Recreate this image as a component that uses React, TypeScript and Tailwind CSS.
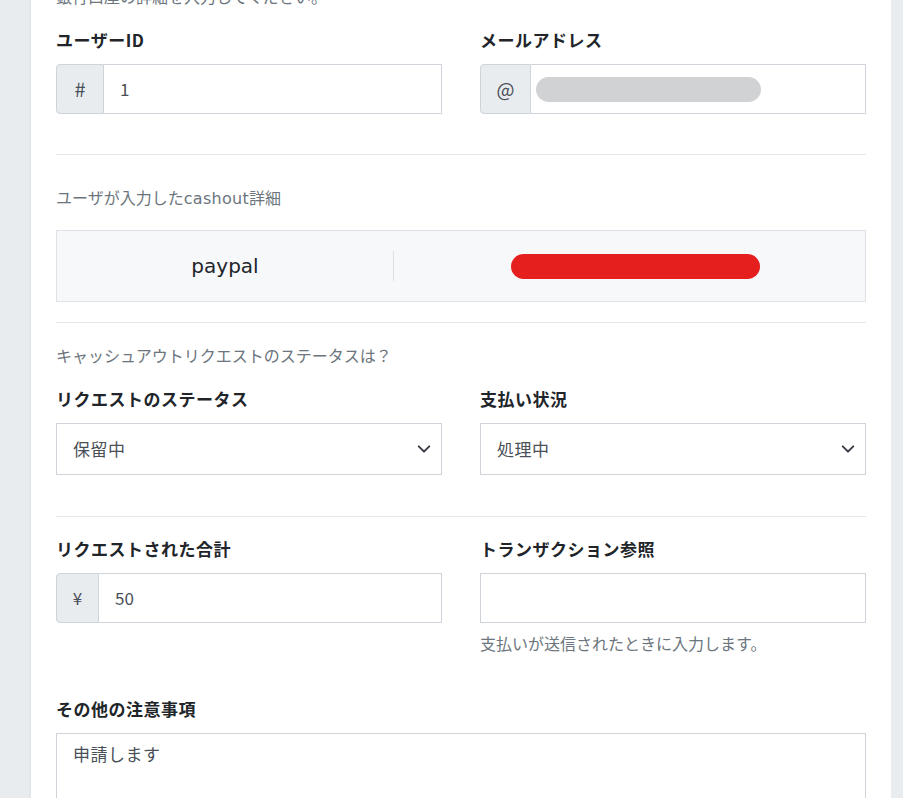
import React from 'react';

const jp = { fontFamily: '"Noto Sans CJK JP", "Noto Sans", sans-serif' };

function Label({ children }: { children: React.ReactNode }) {
  return <div className="text-[17px] leading-[24px] tracking-[0.5px] font-bold text-[#212529] mb-3">{children}</div>;
}

function Chevron() {
  return (
    <svg width="14" height="14" viewBox="0 0 16 16" fill="none" stroke="#343a40" strokeWidth="2.2" strokeLinecap="round" strokeLinejoin="round">
      <path d="M2 5l6 6 6-6" />
    </svg>
  );
}

export default function App() {
  return (
    <div className="min-h-[798px] bg-[#e9ecef] flex pl-[31px] pr-[12px] overflow-hidden" style={jp}>
      <div className="flex-1 bg-white px-[25px] pb-10 shadow-[-1px_0_2px_rgba(0,0,0,0.05)]">
        {/* clipped intro line */}
        <div className="-mt-[14px] text-[16px] leading-[20px] text-[#6c757d]">銀行口座の詳細を入力してください。</div>

        {/* User / email */}
        <div className="grid grid-cols-2 gap-x-[38px] mt-[22px]">
          <div>
            <Label>ユーザーID</Label>
            <div className="flex h-[50px]">
              <div className="w-[48px] flex items-center justify-center bg-[#e9ecef] border border-[#ced4da] rounded-l-[4px] text-[20px] text-[#495057]">#</div>
              <div className="flex-1 flex items-center border border-l-0 border-[#ced4da] px-4 text-[17px] text-[#495057]">1</div>
            </div>
          </div>
          <div>
            <Label>メールアドレス</Label>
            <div className="flex h-[50px]">
              <div className="w-[51px] flex items-center justify-center bg-[#e9ecef] border border-[#ced4da] rounded-l-[4px] text-[19px] text-[#495057]">@</div>
              <div className="flex-1 flex items-center border border-l-0 border-[#ced4da] pl-[5px]">
                <div className="w-[225px] h-[25px] rounded-full bg-[#d1d2d4]" />
              </div>
            </div>
          </div>
        </div>

        <div className="h-px bg-[#e5e7eb] mt-[40px]" />

        <div className="mt-[32px] text-[16px] leading-[20px] text-[#6c757d]">
          ユーザが入力した<span style={{ fontFamily: '"DejaVu Sans", sans-serif', fontSize: '16px', letterSpacing: '0.3px' }}>cashout</span>詳細
        </div>

        <div className="mt-[21px] h-[72px] flex items-center bg-[#f7f8fa] border border-[#dee2e6]">
          <div className="w-[337px] h-[30px] flex items-center justify-center border-r border-[#dee2e6] text-[20px] text-[#212529]" style={{ fontFamily: '"DejaVu Sans", sans-serif' }}>
            paypal
          </div>
          <div className="flex-1 flex items-center justify-center pl-[12px]">
            <div className="w-[249px] h-[25px] rounded-full bg-[#e51e1e]" />
          </div>
        </div>

        <div className="h-px bg-[#e5e7eb] mt-[20px]" />

        <div className="mt-[22px] text-[16px] leading-[20px] text-[#6c757d]">キャッシュアウトリクエストのステータスは？</div>

        <div className="grid grid-cols-2 gap-x-[38px] mt-[22px]">
          <div>
            <Label>リクエストのステータス</Label>
            <div className="h-[52px] flex items-center justify-between border border-[#ced4da] pl-4 pr-[10px] text-[17px] tracking-[0.5px] text-[#495057]">
              <span>保留中</span>
              <Chevron />
            </div>
          </div>
          <div>
            <Label>支払い状況</Label>
            <div className="h-[52px] flex items-center justify-between border border-[#ced4da] pl-4 pr-[10px] text-[17px] tracking-[0.5px] text-[#495057]">
              <span>処理中</span>
              <Chevron />
            </div>
          </div>
        </div>

        <div className="h-px bg-[#e5e7eb] mt-[41px]" />

        <div className="grid grid-cols-2 gap-x-[38px] mt-[20px]">
          <div>
            <Label>リクエストされた合計</Label>
            <div className="flex h-[50px]">
              <div className="w-[43px] flex items-center justify-center bg-[#e9ecef] border border-[#ced4da] rounded-l-[4px] text-[17px] text-[#495057]">¥</div>
              <div className="flex-1 flex items-center border border-l-0 border-[#ced4da] px-4 text-[17px] text-[#495057]">50</div>
            </div>
          </div>
          <div>
            <Label>トランザクション参照</Label>
            <div className="h-[50px] border border-[#ced4da]" />
            <div className="mt-[10px] text-[16px] leading-[20px] text-[#6c757d]">支払いが送信されたときに入力します。</div>
          </div>
        </div>

        <div className="mt-[44px]">
          <Label>その他の注意事項</Label>
          <div className="h-[120px] border border-[#ced4da] px-4 pt-[8px] text-[17px] leading-[24px] tracking-[0.5px] text-[#495057]">申請します</div>
        </div>
      </div>
    </div>
  );
}
